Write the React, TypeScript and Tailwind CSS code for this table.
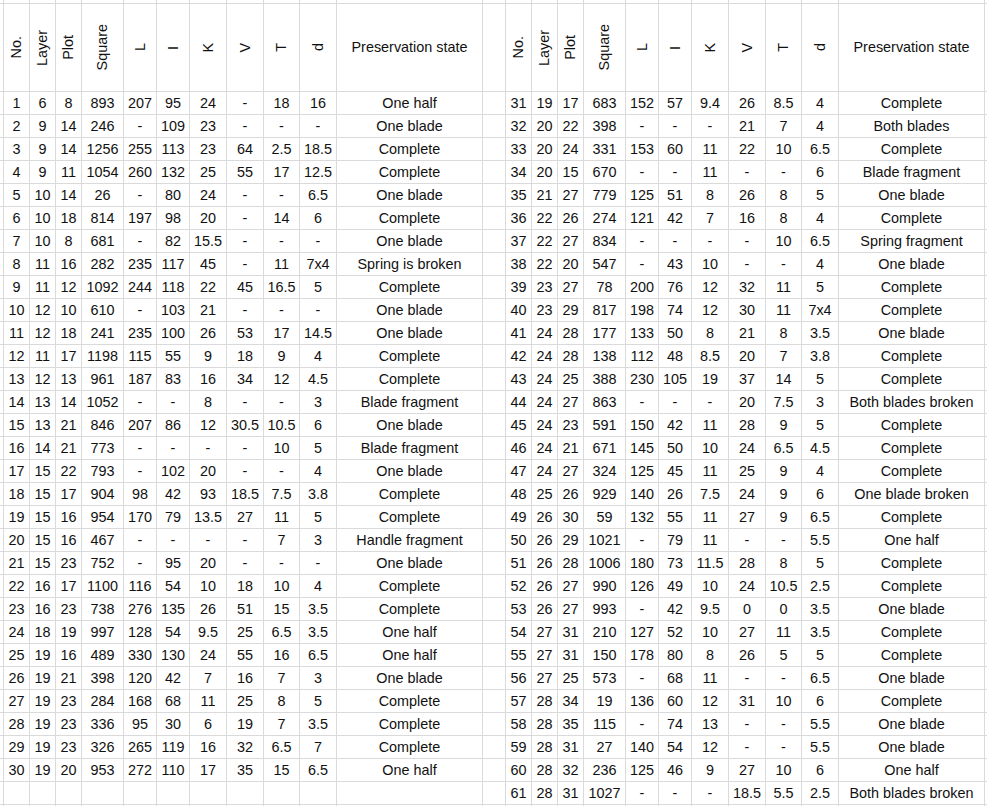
const LEFT = `1 6 8 893 207 95 24 - 18 16|One half
2 9 14 246 - 109 23 - - -|One blade
3 9 14 1256 255 113 23 64 2.5 18.5|Complete
4 9 11 1054 260 132 25 55 17 12.5|Complete
5 10 14 26 - 80 24 - - 6.5|One blade
6 10 18 814 197 98 20 - 14 6|Complete
7 10 8 681 - 82 15.5 - - -|One blade
8 11 16 282 235 117 45 - 11 7x4|Spring is broken
9 11 12 1092 244 118 22 45 16.5 5|Complete
10 12 10 610 - 103 21 - - -|One blade
11 12 18 241 235 100 26 53 17 14.5|One blade
12 11 17 1198 115 55 9 18 9 4|Complete
13 12 13 961 187 83 16 34 12 4.5|Complete
14 13 14 1052 - - 8 - - 3|Blade fragment
15 13 21 846 207 86 12 30.5 10.5 6|One blade
16 14 21 773 - - - - 10 5|Blade fragment
17 15 22 793 - 102 20 - - 4|One blade
18 15 17 904 98 42 93 18.5 7.5 3.8|Complete
19 15 16 954 170 79 13.5 27 11 5|Complete
20 15 16 467 - - - - 7 3|Handle fragment
21 15 23 752 - 95 20 - - -|One blade
22 16 17 1100 116 54 10 18 10 4|Complete
23 16 23 738 276 135 26 51 15 3.5|Complete
24 18 19 997 128 54 9.5 25 6.5 3.5|One half
25 19 16 489 330 130 24 55 16 6.5|One half
26 19 21 398 120 42 7 16 7 3|One blade
27 19 23 284 168 68 11 25 8 5|Complete
28 19 23 336 95 30 6 19 7 3.5|Complete
29 19 23 326 265 119 16 32 6.5 7|Complete
30 19 20 953 272 110 17 35 15 6.5|One half`

const RIGHT = `31 19 17 683 152 57 9.4 26 8.5 4|Complete
32 20 22 398 - - - 21 7 4|Both blades
33 20 24 331 153 60 11 22 10 6.5|Complete
34 20 15 670 - - 11 - - 6|Blade fragment
35 21 27 779 125 51 8 26 8 5|One blade
36 22 26 274 121 42 7 16 8 4|Complete
37 22 27 834 - - - - 10 6.5|Spring fragment
38 22 20 547 - 43 10 - - 4|One blade
39 23 27 78 200 76 12 32 11 5|Complete
40 23 29 817 198 74 12 30 11 7x4|Complete
41 24 28 177 133 50 8 21 8 3.5|One blade
42 24 28 138 112 48 8.5 20 7 3.8|Complete
43 24 25 388 230 105 19 37 14 5|Complete
44 24 27 863 - - - 20 7.5 3|Both blades broken
45 24 23 591 150 42 11 28 9 5|Complete
46 24 21 671 145 50 10 24 6.5 4.5|Complete
47 24 27 324 125 45 11 25 9 4|Complete
48 25 26 929 140 26 7.5 24 9 6|One blade broken
49 26 30 59 132 55 11 27 9 6.5|Complete
50 26 29 1021 - 79 11 - - 5.5|One half
51 26 28 1006 180 73 11.5 28 8 5|Complete
52 26 27 990 126 49 10 24 10.5 2.5|Complete
53 26 27 993 - 42 9.5 0 0 3.5|One blade
54 27 31 210 127 52 10 27 11 3.5|Complete
55 27 31 150 178 80 8 26 5 5|Complete
56 27 25 573 - 68 11 - - 6.5|One blade
57 28 34 19 136 60 12 31 10 6|Complete
58 28 35 115 - 74 13 - - 5.5|One blade
59 28 31 27 140 54 12 - - 5.5|One blade
60 28 32 236 125 46 9 27 10 6|One half
61 28 31 1027 - - - 18.5 5.5 2.5|Both blades broken`

const parse = (s: string) =>
  s.split('\n').map(l => {
    const [nums, state] = l.split('|')
    return [...nums.trim().split(' '), state]
  })

const left = parse(LEFT)
const right = parse(RIGHT)
const EMPTY = Array(11).fill('')

const HEAD = ['No.', 'Layer', 'Plot', 'Square', 'L', 'I', 'K', 'V', 'T', 'd']

const cell = 'bg-white flex items-center justify-center whitespace-nowrap overflow-hidden'

function Blank({ n }: { n: number }) {
  return <>{Array.from({ length: n }, (_, i) => <div key={i} className="bg-white" />)}</>
}

function Head() {
  return (
    <>
      {HEAD.map(h => (
        <div key={h} className={cell}>
          <span className="[writing-mode:vertical-rl] rotate-180 leading-none">{h}</span>
        </div>
      ))}
      <div className={cell}>Preservation state</div>
    </>
  )
}

function Cells({ row }: { row: string[] }) {
  return <>{row.map((v, i) => <div key={i} className={`${cell} pt-px`}>{v}</div>)}</>
}

export default function App() {
  return (
    <div className="w-[987px] h-[806px] overflow-hidden bg-white">
      <div
        className="grid gap-px bg-[#dadada] text-[14.4px] text-[#111] font-['Liberation_Sans',Arial,sans-serif]
          grid-cols-[3px_25px_25px_25px_41px_32px_32px_36px_36px_35px_36px_145px_22px_25px_25px_25px_41px_32px_32px_36px_36px_35px_36px_145px_2px]
          grid-rows-[3px_87px_repeat(31,22px)_1px]"
      >
        {/* strip of the row above, cut off by the screenshot */}
        <Blank n={25} />

        <div className="bg-white" />
        <Head />
        <div className="bg-white" />
        <Head />
        <div className="bg-white" />

        {Array.from({ length: 31 }, (_, i) => (
          <div key={i} className="contents">
            <div className="bg-white" />
            <Cells row={left[i] ?? EMPTY} />
            <div className="bg-white" />
            <Cells row={right[i] ?? EMPTY} />
            <div className="bg-white" />
          </div>
        ))}

        <Blank n={25} />
      </div>
    </div>
  )
}
